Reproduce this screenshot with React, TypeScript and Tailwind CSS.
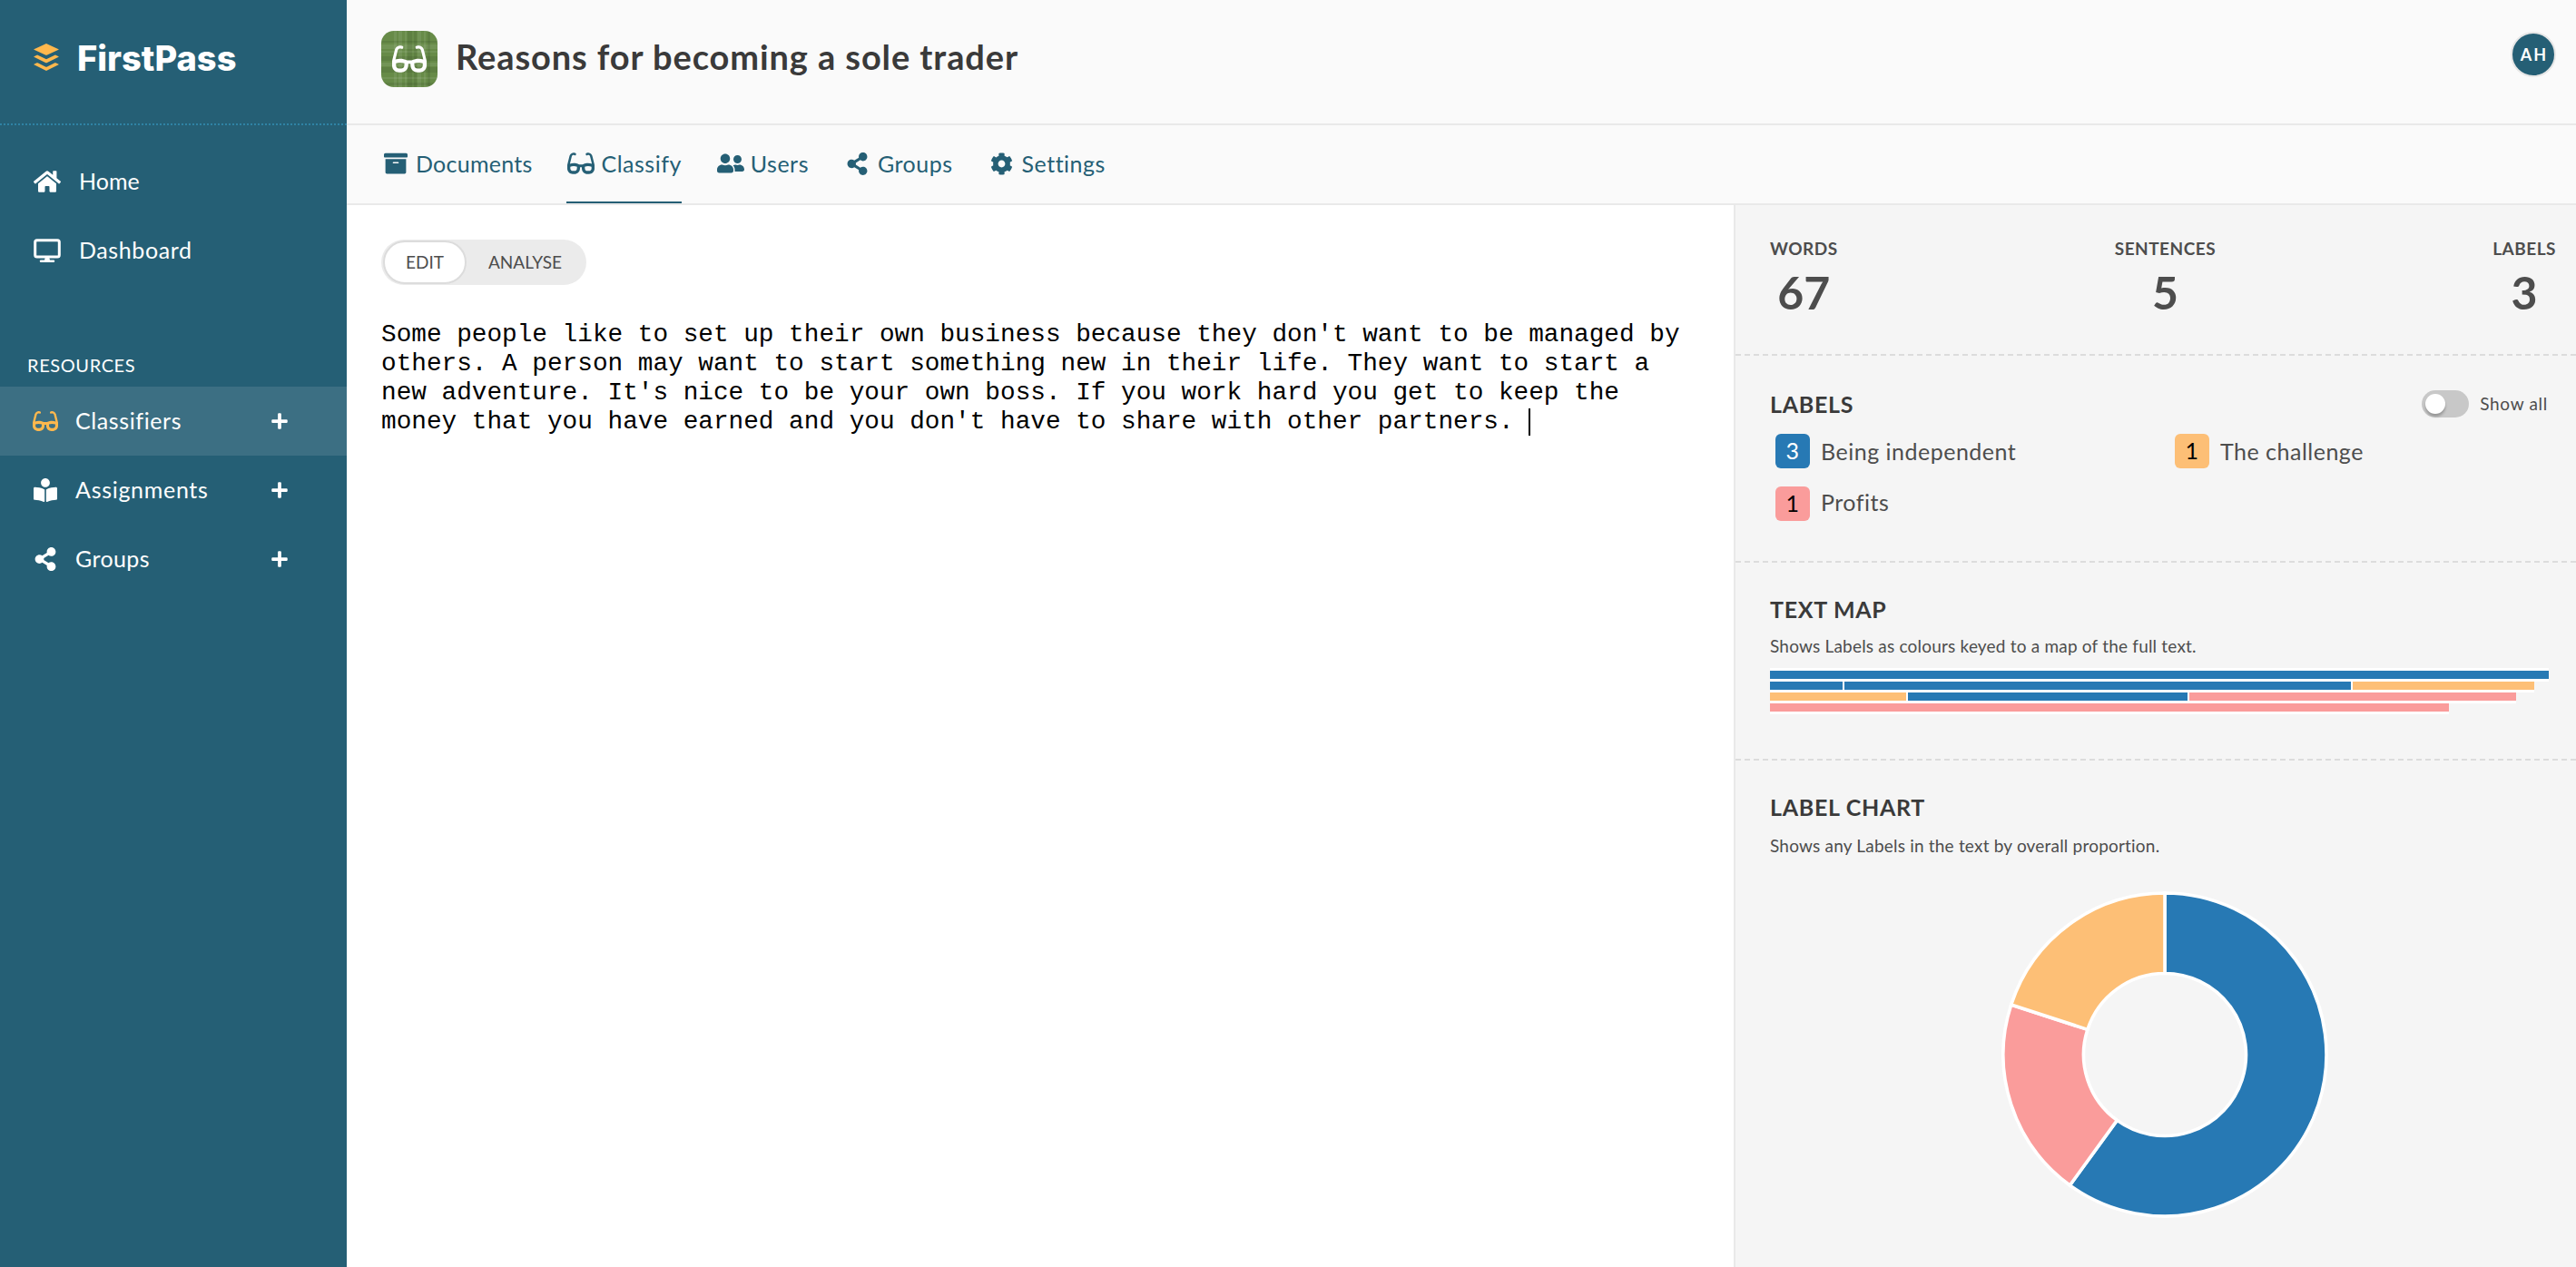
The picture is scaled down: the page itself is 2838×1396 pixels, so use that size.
import type { ReactNode } from 'react';
import { FaArchive, FaBookReader, FaBuffer, FaCog, FaGlasses, FaHome, FaPlus, FaShareAlt, FaUserFriends } from 'react-icons/fa';

const MonitorIcon = () => (
  <svg className="h-[26px] w-[30px]" viewBox="0 0 30 26" fill="none" stroke="currentColor">
    <rect x="1.7" y="1.7" width="26.6" height="18.4" rx="2" strokeWidth="3" />
    <path d="M12.8 20h4.4l.8 4h-6z" fill="currentColor" stroke="none" />
    <path d="M8 24.7h14" strokeWidth="2.4" strokeLinecap="round" />
  </svg>
);

const MainLink = ({ icon, children }: { icon: ReactNode; children: ReactNode }) => (
  <a className="flex h-[76px] items-center pl-[37px]">
    <span className="flex w-[50px] items-center">{icon}</span>
    {children}
  </a>
);

const ResourceLink = ({ icon, children, active }: { icon: ReactNode; children: ReactNode; active?: boolean }) => (
  <a className={`flex h-[76px] items-center pr-[64px] pl-[36px] ${active ? 'bg-[#3c6f83]' : ''}`}>
    <span className="flex w-7 justify-center">{icon}</span>
    <span className="ml-[19px] flex-1">{children}</span>
    <FaPlus className="size-5" />
  </a>
);

const Sidebar = () => (
  <aside className="flex w-[382px] shrink-0 flex-col bg-[#255f75] text-[25px] tracking-[0.6px] text-white">
    <div className="flex h-[138px] items-start border-b-2 border-dotted border-[#2f83a5] pt-[42px] pl-[34px]">
      <FaBuffer className="mt-1 size-[34px] text-[#ffb84d]" />
      <span className="ml-[17px] font-['Inter'] text-[38px] leading-[44px] font-extrabold tracking-normal">FirstPass</span>
    </div>
    <nav className="pt-6">
      <MainLink icon={<FaHome className="size-[30px]" />}>
        <span className="tracking-normal">Home</span>
      </MainLink>
      <MainLink icon={<MonitorIcon />}>Dashboard</MainLink>
    </nav>
    <h2 className="mt-[74px] mb-2.5 pl-[30px] text-[20px] leading-7">RESOURCES</h2>
    <nav>
      <ResourceLink icon={<FaGlasses className="size-7 text-[#ffb84d]" />} active>
        Classifiers
      </ResourceLink>
      <ResourceLink icon={<FaBookReader className="size-[26px]" />}>
        <span className="tracking-[0.7px]">Assignments</span>
      </ResourceLink>
      <ResourceLink icon={<FaShareAlt className="size-[26px]" />}>
        <span className="tracking-[0.4px]">Groups</span>
      </ResourceLink>
    </nav>
  </aside>
);

const Tab = ({ icon, children, active }: { icon: ReactNode; children: ReactNode; active?: boolean }) => (
  <a className={`flex h-[86px] items-center gap-1.5 border-b-2 pt-0.5 ${active ? 'border-[#255f75]' : 'border-transparent'}`}>
    <span className="-mt-0.5 flex w-8 justify-center">{icon}</span>
    {children}
  </a>
);

const Stat = ({ label, value }: { label: string; value: number }) => (
  <div className="text-center">
    <div className="text-[19px] leading-7 font-bold tracking-[0.5px]">{label}</div>
    <div className="mt-1 text-[50px] leading-[60px] font-bold">{value}</div>
  </div>
);

const labels = [
  { count: 3, name: 'Being independent', style: 'bg-[#2779b4] text-white' },
  { count: 1, name: 'The challenge', style: 'bg-[#fdbf76] text-black' },
  { count: 1, name: 'Profits', style: 'bg-[#fa9c9b] text-black' },
];

const BLUE = '#2779b4';
const ORANGE = '#fdbf76';
const PINK = '#fa9c9b';

const textMap = [
  [{ w: 858, color: BLUE }],
  [{ w: 80, color: BLUE }, { w: 558, color: BLUE }, { w: 200, color: ORANGE }],
  [{ w: 150, color: ORANGE }, { w: 308, color: BLUE }, { w: 360, color: PINK }],
  [{ w: 748, color: PINK }],
];

// angles are clockwise degrees from twelve o'clock
const point = (r: number, angle: number) => {
  const a = (angle * Math.PI) / 180;
  return `${r * Math.sin(a)} ${-r * Math.cos(a)}`;
};

const slice = (from: number, to: number) => {
  const large = to - from > 180 ? 1 : 0;
  return `M${point(178, from)}A178 178 0 ${large} 1 ${point(178, to)}L${point(89.5, to)}A89.5 89.5 0 ${large} 0 ${point(89.5, from)}Z`;
};

const Donut = () => (
  <svg className="mx-auto size-[360px]" viewBox="-180 -180 360 360" stroke="#fff" strokeWidth="3.6">
    <path d={slice(0, 216)} fill={BLUE} />
    <path d={slice(216, 288)} fill={PINK} />
    <path d={slice(288, 360)} fill={ORANGE} />
  </svg>
);

// plaid tile behind the classifier's icon
const PlaidBadge = () => (
  <span className="grid size-[62px] place-items-center overflow-hidden rounded-[14px] bg-[#678b48] text-white">
    <svg className="col-start-1 row-start-1 size-[62px]" viewBox="0 0 62 62">
      <g fill="#fff" fillOpacity="0.08">
        <path d="M14 0h3v62h-3zM19 0h4v62h-4zM26 0h2v62h-2zM40 0h4v62h-4zM47 0h2v62h-2z" />
        <path d="M0 15h62v5H0zM0 22h62v2H0zM0 35h62v4H0zM0 51h62v2H0z" />
      </g>
      <g fill="#000" fillOpacity="0.08">
        <path d="M29 0h5v62h-5zM36 0h3v62h-3zM51 0h3v62h-3z" />
        <path d="M0 11h62v2H0zM0 28h62v5H0zM0 40h62v6H0zM0 57h62v3H0z" />
      </g>
    </svg>
    <FaGlasses className="col-start-1 row-start-1 size-[38px]" />
  </span>
);

const Heading = ({ children }: { children: ReactNode }) => (
  <h3 className="text-[25px] leading-8 font-bold tracking-[0.7px] text-[#3a3a3a]">{children}</h3>
);

const Divider = () => <div className="-mr-[10px] border-b-2 border-dashed border-[#dcdcdc]" />;

const Panel = () => (
  <aside className="w-[928px] shrink-0 overflow-hidden border-l-2 border-[#e9e9e9] bg-[#f5f5f5] text-[#4d4d4d]">
    <div className="flex h-[164px] justify-between pt-[34px] pr-[22px] pl-[38px]">
      <Stat label="WORDS" value={67} />
      <Stat label="SENTENCES" value={5} />
      <Stat label="LABELS" value={3} />
    </div>
    <Divider />
    <div className="h-[226px] pt-[37px] pl-[38px]">
      <div className="flex items-center pr-[31px]">
        <Heading>LABELS</Heading>
        <span className="ml-auto flex h-[30px] w-[52px] items-center rounded-full bg-[#c8c8c8] pl-[4px]">
          <span className="size-[22px] rounded-full bg-white shadow-[0_3px_3px_rgba(0,0,0,0.25)]" />
        </span>
        <span className="ml-3 pt-px text-[19px] tracking-[0.7px]">Show all</span>
      </div>
      <ul className="mt-[17px] grid grid-cols-[440px_1fr] gap-y-5 pl-[6px] text-[25px] tracking-[0.5px]">
        {labels.map((label, i) => (
          <li key={label.name} className="flex h-[38px] items-center">
            <span className={`flex size-[38px] items-center justify-center rounded-md ${label.style}`}>{label.count}</span>
            <span className={i < 2 ? 'ml-3 pt-px' : 'ml-3 pb-[3px]'}>{label.name}</span>
          </li>
        ))}
      </ul>
    </div>
    <Divider />
    <div className="h-[216px] pt-[35px] pl-[38px]">
      <Heading>TEXT MAP</Heading>
      <p className="mt-[11px] text-[19px] leading-7 tracking-[0.2px]">
        Shows Labels as colours keyed to a map of the full text.
      </p>
      <div className="mt-[10px] flex flex-col items-start">
        {textMap.map((row, i) => (
          <div key={i} className="flex gap-0.5 border-b-3 border-white bg-white first:border-t-3">
            {row.map((seg, j) => (
              <span key={j} className="h-[9px]" style={{ width: seg.w, backgroundColor: seg.color }} />
            ))}
          </div>
        ))}
      </div>
    </div>
    <Divider />
    <div className="pt-[35px] pl-[38px]">
      <Heading>LABEL CHART</Heading>
      <p className="mt-[13px] text-[19px] leading-7 tracking-[0.2px]">Shows any Labels in the text by overall proportion.</p>
      <div className="mt-9 w-[869px]">
        <Donut />
      </div>
    </div>
  </aside>
);

export default function App() {
  return (
    <div className="flex h-[1396px] w-[2838px] overflow-hidden bg-white font-['Lato',sans-serif]">
      <Sidebar />
      <div className="flex flex-1 flex-col">
        <header className="flex h-[138px] items-start border-b-2 border-[#e9e9e9] bg-[#fafafa] pt-[34px] pr-[22px] pl-[38px]">
          <PlaidBadge />
          <h1 className="ml-5 text-[38px] leading-[57px] font-bold tracking-[0.9px] text-[#3a3a3a]">
            Reasons for becoming a sole trader
          </h1>
          <span className="mt-px ml-auto flex size-[50px] items-center justify-center rounded-full border-2 border-[#e6e6e6] bg-[#255f75] pl-0.5 text-[18px] font-bold tracking-[2px] text-white">
            AH
          </span>
        </header>
        <nav className="flex h-[88px] gap-[38px] border-b-2 border-[#e9e9e9] bg-[#fafafa] pl-[38px] text-[25px] tracking-[0.5px] text-[#255f75]">
          <Tab icon={<FaArchive className="size-[26px]" />}>
            <span className="tracking-[0.25px]">Documents</span>
          </Tab>
          <Tab icon={<FaGlasses className="size-[30px]" />} active>
            Classify
          </Tab>
          <Tab icon={<FaUserFriends className="size-[30px]" />}>Users</Tab>
          <Tab icon={<FaShareAlt className="size-[25px]" />}>Groups</Tab>
          <Tab icon={<FaCog className="size-[25px]" />}>Settings</Tab>
        </nav>
        <div className="flex flex-1">
          <main className="flex-1 pt-[38px] pl-[38px]">
            <div className="flex h-[50px] w-[226px] items-center rounded-full bg-[#ebebeb] pl-0.5 text-[19px] text-[#4d4d4d]">
              <span className="flex h-[48px] w-[92px] items-center justify-center rounded-full border-2 border-[#dcdcdc] bg-white">
                EDIT
              </span>
              <span className="ml-6">ANALYSE</span>
            </div>
            <p className="mt-[39px] font-['Liberation_Mono',monospace] text-[27.73px] leading-8 whitespace-pre text-black">
              Some people like to set up their own business because they don't want to be managed by{'\n'}
              others. A person may want to start something new in their life. They want to start a{'\n'}
              new adventure. It's nice to be your own boss. If you work hard you get to keep the{'\n'}
              money that you have earned and you don't have to share with other partners.{' '}
              <span className="inline-block h-[30px] w-0.5 bg-black align-middle" />
            </p>
          </main>
          <Panel />
        </div>
      </div>
    </div>
  );
}
